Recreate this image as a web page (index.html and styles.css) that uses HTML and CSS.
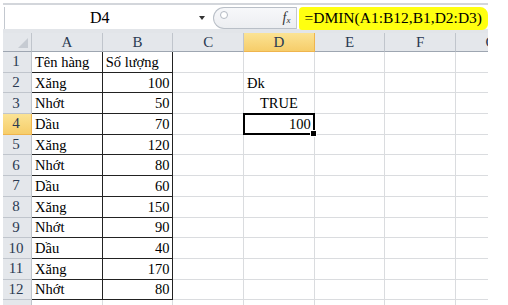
FILE: index.html
```html
<!DOCTYPE html>
<html lang="vi">
<head>
  <meta charset="UTF-8">
  <title>DMIN</title>
  <link rel="stylesheet" href="styles.css">
</head>
<body>
  <div class="excel">
    <div class="fbar">
      <div class="namebox"><span class="ref">D4</span><span class="drop"></span></div>
      <div class="fxzone"><span class="knob"></span><span class="fx">f<sub>x</sub></span></div>
      <div class="formula"><span class="mark">=DMIN(A1:B12,B1,D2:D3)</span></div>
    </div>

    <div class="sheet">
      <div class="hd corner"></div>
      <div class="hd">A</div><div class="hd">B</div><div class="hd">C</div>
      <div class="hd sel">D</div><div class="hd">E</div><div class="hd">F</div><div class="hd">G</div>

      <div class="rh">1</div><div class="c ta">Tên hàng</div><div class="c tb">Số lượng</div>
      <div class="c"></div><div class="c"></div><div class="c"></div><div class="c"></div><div class="c"></div>

      <div class="rh">2</div><div class="c ta">Xăng</div><div class="c tb num">100</div>
      <div class="c"></div><div class="c">Đk</div><div class="c"></div><div class="c"></div><div class="c"></div>

      <div class="rh">3</div><div class="c ta">Nhớt</div><div class="c tb num">50</div>
      <div class="c"></div><div class="c mid">TRUE</div><div class="c"></div><div class="c"></div><div class="c"></div>

      <div class="rh sel">4</div><div class="c ta">Dầu</div><div class="c tb num">70</div>
      <div class="c"></div><div class="c num active">100<span class="handle"></span></div><div class="c"></div><div class="c"></div><div class="c"></div>

      <div class="rh">5</div><div class="c ta">Xăng</div><div class="c tb num">120</div>
      <div class="c"></div><div class="c"></div><div class="c"></div><div class="c"></div><div class="c"></div>

      <div class="rh">6</div><div class="c ta">Nhớt</div><div class="c tb num">80</div>
      <div class="c"></div><div class="c"></div><div class="c"></div><div class="c"></div><div class="c"></div>

      <div class="rh">7</div><div class="c ta">Dầu</div><div class="c tb num">60</div>
      <div class="c"></div><div class="c"></div><div class="c"></div><div class="c"></div><div class="c"></div>

      <div class="rh">8</div><div class="c ta">Xăng</div><div class="c tb num">150</div>
      <div class="c"></div><div class="c"></div><div class="c"></div><div class="c"></div><div class="c"></div>

      <div class="rh">9</div><div class="c ta">Nhớt</div><div class="c tb num">90</div>
      <div class="c"></div><div class="c"></div><div class="c"></div><div class="c"></div><div class="c"></div>

      <div class="rh">10</div><div class="c ta">Dầu</div><div class="c tb num">40</div>
      <div class="c"></div><div class="c"></div><div class="c"></div><div class="c"></div><div class="c"></div>

      <div class="rh">11</div><div class="c ta">Xăng</div><div class="c tb num">170</div>
      <div class="c"></div><div class="c"></div><div class="c"></div><div class="c"></div><div class="c"></div>

      <div class="rh">12</div><div class="c ta">Nhớt</div><div class="c tb num">80</div>
      <div class="c"></div><div class="c"></div><div class="c"></div><div class="c"></div><div class="c"></div>

      <div class="rh">13</div><div class="c"></div><div class="c"></div>
      <div class="c"></div><div class="c"></div><div class="c"></div><div class="c"></div><div class="c"></div>
    </div>
  </div>
</body>
</html>
```

FILE: styles.css
```css
body {
  margin: 0;
  background: #fff;
  font-family: "Liberation Serif", Tinos, "DejaVu Serif", serif;
  color: #000;
}

.excel {
  margin: 3px 0 0 3px;
  width: 485px;
  height: 302px;
  overflow: hidden;
}

/* formula bar */
.fbar {
  display: flex;
  height: 22px;
  border-top: 2px solid #d3d6db;
  padding-top: 2px;
  border-bottom: 4px solid #e2e5e9;
}

.namebox {
  display: flex;
  align-items: center;
  width: 210px;
  margin-left: 1px;
  border-left: 1px solid #c3c8cf;
  background: #fff;
}

.namebox .ref {
  flex: 1;
  text-align: center;
  font-size: 16px;
}

.drop {
  width: 18px;
  height: 6px;
  position: relative;
}

.drop::after {
  content: "";
  position: absolute;
  left: 5px;
  top: 1px;
  border-left: 3px solid transparent;
  border-right: 3px solid transparent;
  border-top: 4px solid #333;
}

.fxzone {
  display: flex;
  align-items: center;
  justify-content: space-between;
  width: 84px;
  margin-left: 1px;
  padding: 0 6px 0 6px;
  box-sizing: border-box;
  border: 1px solid #b9bfc7;
  border-right: none;
  border-radius: 11px 0 0 11px;
  background: linear-gradient(#f7f8fa, #eceef1);
}

.knob {
  width: 6px;
  height: 6px;
  margin-top: -6px;
  border: 1px solid #b3b9c2;
  border-radius: 50%;
  background: #fff;
}

.fx {
  font-style: italic;
  font-size: 14px;
  color: #333;
}

.fx sub {
  font-size: 9px;
  vertical-align: -1px;
}

.formula {
  flex: 1;
  display: flex;
  align-items: center;
  border-left: 1px solid #c3c8cf;
  background: #fff;
}

.mark {
  margin-left: 2px;
  padding: 1px 6px 2px 5px;
  background: #ffff10;
  border-radius: 4px 8px 6px 3px;
  font-size: 15.5px;
  line-height: 20px;
}

/* grid */
.sheet {
  display: grid;
  grid-template-columns: 29px repeat(7, 70.7px);
  grid-template-rows: 19px repeat(13, 20.7px);
}

.hd,
.rh {
  display: flex;
  align-items: center;
  justify-content: center;
  box-sizing: border-box;
  background: #e4e7eb;
  color: #2a3a52;
  font-size: 15px;
  border-right: 1px solid #c0c5cc;
  border-bottom: 1px solid #c0c5cc;
}

.hd {
  border-bottom-color: #9ea6b1;
}

.rh {
  padding-right: 2px;
}

.hd.sel,
.rh.sel {
  background: linear-gradient(#fbe394, #f6cd6a);
  border-color: #efb54e;
  color: #2a3a52;
}

.corner {
  position: relative;
}

.corner::after {
  content: "";
  position: absolute;
  right: 3px;
  bottom: 3px;
  border-left: 10px solid transparent;
  border-bottom: 10px solid #c6cbd2;
}

.c {
  display: flex;
  align-items: center;
  box-sizing: border-box;
  padding: 1px 3px 0 3px;
  font-size: 14.5px;
  white-space: nowrap;
  border-right: 1px solid #dadcdf;
  border-bottom: 1px solid #dadcdf;
}

.c.num {
  justify-content: flex-end;
}

.c.mid {
  justify-content: center;
}

.c.ta,
.c.tb {
  border-bottom-color: #222;
  border-right-color: #222;
}

.c.active {
  position: relative;
  border: 2px solid #000;
  margin: -1px 0 0 -1px;
  padding-right: 2px;
}

.handle {
  position: absolute;
  right: -4px;
  bottom: -4px;
  width: 5px;
  height: 5px;
  background: #000;
  border: 1px solid #fff;
}
```
